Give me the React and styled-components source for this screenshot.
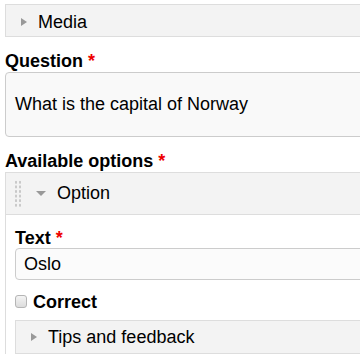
import React from 'react';
import styled, { createGlobalStyle } from 'styled-components';

const GlobalStyle = createGlobalStyle`
  html, body {
    margin: 0;
    padding: 0;
    background: #fff;
    overflow: hidden;
  }
  body {
    font-family: "Liberation Sans", Arial, sans-serif;
    font-size: 18px;
    color: #000;
  }
`;

const Page = styled.div`
  width: 420px;
  padding: 4px 0 0 5px;
`;

const Collapsible = styled.div`
  display: flex;
  align-items: center;
  height: 32px;
  padding: ${p => p.top || 0}px 0 0 15px;
  box-sizing: border-box;
  height: ${p => p.h || 33}px;
  background: #f3f3f3;
  border: 1px solid #ddd;
`;

const Arrow = styled.span`
  width: 0;
  height: 0;
  margin-right: 11px;
  ${p => p.open
    ? `border-left: 5px solid transparent;
       border-right: 5px solid transparent;
       border-top: 5px solid #999;`
    : `border-top: 4.5px solid transparent;
       border-bottom: 4.5px solid transparent;
       border-left: 6px solid #999;`}
`;

const Label = styled.div`
  font-weight: bold;
  margin: ${p => p.m || '14px 0 0'};
  line-height: 21px;
`;

const Star = styled.span`
  color: #e00;
  margin-left: 5px;
`;

const TextArea = styled.div`
  height: 63px;
  padding: 0 9px;
  background: #f9f9f9;
  border: 1px solid #ccc;
  border-radius: 4px;
  display: flex;
  align-items: center;
`;

const Group = styled.div`
  border: 1px solid #ddd;
  border-bottom: none;
`;

const GroupHead = styled.div`
  display: flex;
  align-items: center;
  height: 41px;
  background: #f3f3f3;
  border-bottom: 1px solid #ddd;
`;

const Handle = styled.div`
  width: 8px;
  height: 28px;
  margin: 0 14px 0 8px;
  background-image: radial-gradient(circle, #c8c8c8 1px, transparent 1.4px);
  background-size: 4px 4.6px;
`;

const GroupBody = styled.div`
  padding: 0 0 0 9px;
`;

const Input = styled.div`
  height: 30px;
  padding: 0 8px;
  background: #fbfbfb;
  border: 1px solid #ccc;
  border-radius: 4px;
  display: flex;
  align-items: center;
`;

const CheckRow = styled.label`
  display: flex;
  align-items: center;
  height: 40px;
  padding-top: 4px;
  box-sizing: border-box;
  font-weight: bold;
`;

const Box = styled.span`
  width: 10px;
  height: 11px;
  border: 1px solid #b5b5b5;
  border-radius: 3px;
  background: linear-gradient(#f4f4f4, #dcdcdc);
  margin: -2px 6px 0 0;
`;

export default function App() {
  return (
    <>
      <GlobalStyle />
      <Page>
        <Collapsible top={3}>
          <Arrow />
          Media
        </Collapsible>
        <Label>Question<Star>*</Star></Label>
        <TextArea>What is the capital of Norway</TextArea>
        <Label>Available options<Star>*</Star></Label>
        <Group>
          <GroupHead>
            <Handle />
            <Arrow open />
            Option
          </GroupHead>
          <GroupBody>
            <Label m="13px 0 -1px">Text<Star>*</Star></Label>
            <Input>Oslo</Input>
            <CheckRow>
              <Box />
              Correct
            </CheckRow>
            <Collapsible h={34}>
              <Arrow />
              Tips and feedback
            </Collapsible>
          </GroupBody>
        </Group>
      </Page>
    </>
  );
}
